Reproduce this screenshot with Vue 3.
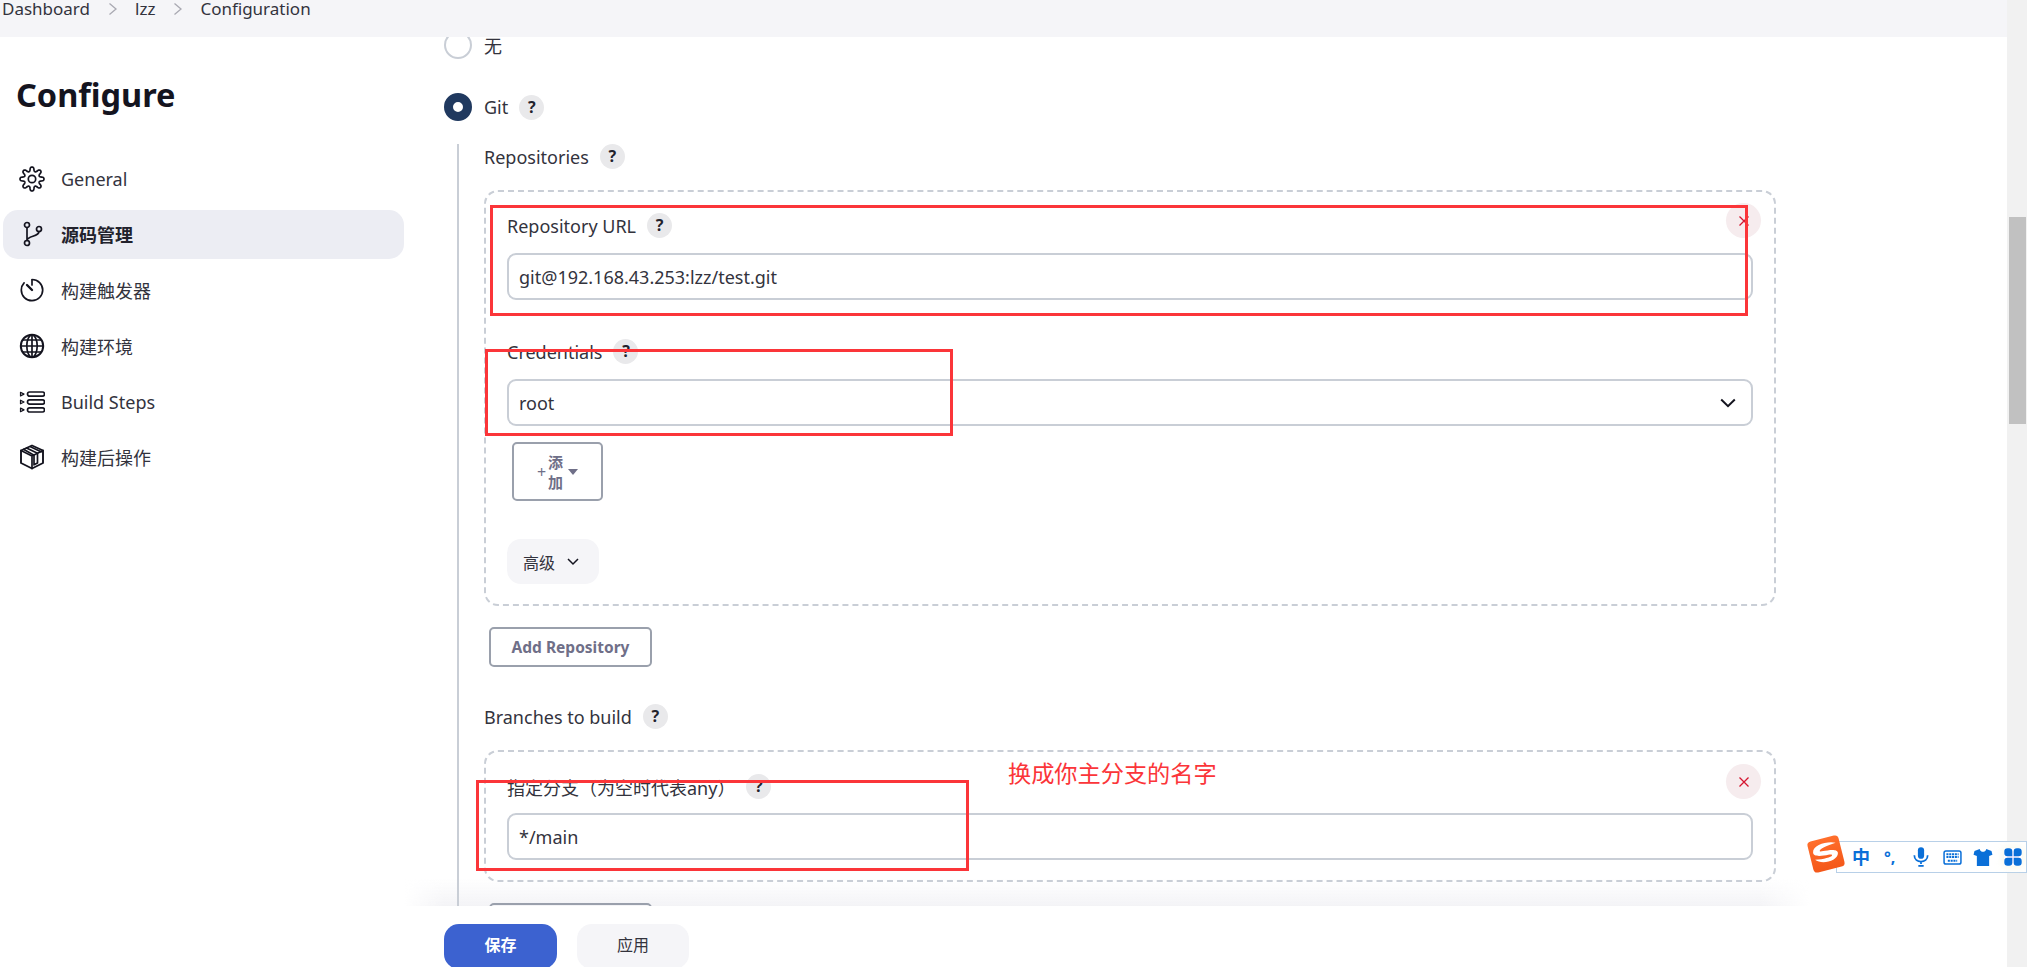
<script setup>
const navItems = [
  { label: 'General', icon: 'gear' },
  { label: '源码管理', icon: 'branch', active: true },
  { label: '构建触发器', icon: 'timer' },
  { label: '构建环境', icon: 'globe' },
  { label: 'Build Steps', icon: 'steps' },
  { label: '构建后操作', icon: 'box' },
]
const crumbs = ['Dashboard', 'lzz', 'Configuration']

// outline of the eight-toothed cog used for "General"
const gearPath = (() => {
  const pts = []
  for (let i = 0; i < 160; i++) {
    const a = (i / 160) * Math.PI * 2
    const wave = Math.cos(a * 8)
    const r = 9.9 + 2.1 * Math.sign(wave) * Math.pow(Math.abs(wave), 0.55)
    pts.push(`${(13 + r * Math.sin(a)).toFixed(2)} ${(13 - r * Math.cos(a)).toFixed(2)}`)
  }
  return 'M' + pts.join('L') + 'Z'
})()
</script>

<template>
  <div class="page">
    <header class="topbar">
      <template v-for="(c, i) in crumbs" :key="c">
        <span class="crumb">{{ c }}</span>
        <svg v-if="i < crumbs.length - 1" class="sep" viewBox="0 0 10 14" width="10" height="14">
          <path d="M1.500 1.500 8 7l-6.500 5.500" fill="none" stroke="#a9a9b2" stroke-width="1.300" />
        </svg>
      </template>
    </header>

    <div class="body">
      <aside class="sidebar">
        <h1 class="title">Configure</h1>
        <nav class="nav">
          <a v-for="n in navItems" :key="n.label" class="nav-item" :class="{ active: n.active }">
            <svg class="nav-icon" viewBox="0 0 26 26" width="26" height="26" fill="none" stroke="#14141f" stroke-width="1.700" stroke-linecap="round" stroke-linejoin="round">
              <template v-if="n.icon === 'gear'">
                <circle cx="13" cy="13" r="3.700" />
                <path :d="gearPath" />
              </template>
              <template v-else-if="n.icon === 'branch'">
                <circle cx="8" cy="4" r="2.500" />
                <circle cx="8" cy="22" r="2.500" />
                <circle cx="20" cy="8" r="2.500" />
                <path d="M8 6.500v13M20 10.500c0 5.500-11.500 4-12 9" />
              </template>
              <template v-else-if="n.icon === 'timer'">
                <path d="M13 2.500c6 0 10.700 4.700 10.700 10.500S19 23.700 13 23.700 2.300 19 2.300 13c0-2.800 1-5.300 2.800-7.200" />
                <path d="M13 3v5" />
                <path d="M8 8l5 5" stroke-width="2.400" />
              </template>
              <template v-else-if="n.icon === 'globe'">
                <circle cx="13" cy="13" r="11.200" stroke-width="2" />
                <ellipse cx="13" cy="13" rx="5.200" ry="11.200" />
                <path d="M13 2v22M2 13h22M3.800 7h18.400M3.800 19h18.400" />
              </template>
              <template v-else-if="n.icon === 'steps'">
                <rect x="8.500" y="3" width="17" height="4.200" rx="2.100" />
                <rect x="8.500" y="10.900" width="17" height="4.200" rx="2.100" />
                <rect x="8.500" y="18.800" width="17" height="4.200" rx="2.100" />
                <path d="M1.500 3.300 5 5.100 1.500 6.900zM1.500 11.200 5 13l-3.500 1.800zM1.500 19.100 5 20.900l-3.500 1.800z" stroke-width="1.200" />
              </template>
              <template v-else>
                <path d="M13 1.500 24 6.500V19l-11 5.500L2 19V6.500z" stroke-width="1.900" />
                <path d="M2 6.500l11 5.500 11-5.500M13 12v12.500" />
                <path d="M7.500 4 18.500 9.300v9.700l-3.500 1.800v-9.500L4.500 5.300" />
                <path d="M11.500 2.700 22 7.800" />
              </template>
            </svg>
            <span>{{ n.label }}</span>
          </a>
        </nav>
      </aside>

      <div class="content">
        <main class="scroller">
          <div class="radio-row first">
            <span class="radio"></span>
            <span class="radio-label">无</span>
          </div>
          <div class="radio-row git">
            <span class="radio on"></span>
            <span class="radio-label">Git</span>
            <span class="help">?</span>
          </div>

          <section class="nested">
            <div class="label-row">
              <span>Repositories</span><span class="help">?</span>
            </div>

            <div class="repeat repo">
              <button class="close"><svg viewBox="0 0 12 12" width="12" height="12"><path d="M1.500 1.500l9 9M10.500 1.500l-9 9" stroke="#d5152f" stroke-width="1.300" /></svg></button>
              <div class="label-row">
                <span>Repository URL</span><span class="help">?</span>
              </div>
              <div class="input">git@192.168.43.253:lzz/test.git</div>

              <div class="label-row cred">
                <span>Credentials</span><span class="help">?</span>
              </div>
              <div class="input select">
                <span>root</span>
                <svg viewBox="0 0 16 10" width="16" height="10"><path d="M1.200 1.500 8 8.200l6.800-6.700" fill="none" stroke="#14141f" stroke-width="2" /></svg>
              </div>

              <button class="btn-add">
                <span class="plus">+</span>
                <span class="add-text">添<br />加</span>
                <span class="caret"></span>
              </button>

              <button class="btn-adv">
                <span>高级</span>
                <svg viewBox="0 0 12 8" width="12" height="8"><path d="M1 1l5 5 5-5" fill="none" stroke="#14141f" stroke-width="1.500" /></svg>
              </button>
            </div>

            <button class="btn-outline">Add Repository</button>

            <div class="label-row branches">
              <span>Branches to build</span><span class="help">?</span>
            </div>

            <div class="repeat branch">
              <button class="close low"><svg viewBox="0 0 12 12" width="12" height="12"><path d="M1.500 1.500l9 9M10.500 1.500l-9 9" stroke="#d5152f" stroke-width="1.300" /></svg></button>
              <div class="label-row">
                <span>指定分支（为空时代表any）</span><span class="help">?</span>
              </div>
              <div class="input">*/main</div>
            </div>

            <button class="btn-outline next"></button>
          </section>
        </main>

        <footer class="actions">
          <button class="save">保存</button>
          <button class="apply">应用</button>
        </footer>
      </div>

      <div class="scrollbar"><div class="thumb"></div></div>
    </div>

    <!-- annotations drawn over the screenshot -->
    <div class="mark m1"></div>
    <div class="mark m2"></div>
    <div class="mark m3"></div>
    <div class="note">换成你主分支的名字</div>

    <!-- IME toolbar floating over the page -->
    <div class="ime">
      <div class="ime-bar">
        <span class="ime-zh">中</span>
        <span class="ime-punct">°,</span>
        <svg viewBox="0 0 18 22" width="16" height="20"><rect x="5.500" y="0" width="7" height="13" rx="3.500" fill="#0a6fd8" /><path d="M1.500 9c0 9.500 15 9.500 15 0M9 16v3" fill="none" stroke="#0a6fd8" stroke-width="2" /><rect x="6" y="20" width="6" height="2" fill="#0a6fd8" /></svg>
        <svg viewBox="0 0 20 16" width="19" height="15"><rect x="1" y="1" width="18" height="14" rx="2" fill="none" stroke="#0a6fd8" stroke-width="1.600" /><path d="M3.500 4.500h13M3.500 7.500h13M5 11.500h10" stroke="#0a6fd8" stroke-width="2" stroke-dasharray="2.200 .8" /></svg>
        <svg viewBox="0 0 20 18" width="20" height="17"><path d="M6.500 0 1 2 0 6l3.500 1.500V18h13V7.500L20 6l-1-4-5.500-2c-.5 4-6.500 4-7 0z" fill="#0a6fd8" /></svg>
        <svg class="clover" viewBox="0 0 18 18" width="18" height="18"><g fill="#0a6fd8"><path d="M8.300 8.300H3.500a3.200 3.200 0 0 1-3.200-3.200V3.500A3.200 3.200 0 0 1 3.500.3h1.600a3.200 3.200 0 0 1 3.200 3.200z" /><path d="M9.700 8.300h4.800a3.200 3.200 0 0 0 3.200-3.200V3.500A3.200 3.200 0 0 0 14.500.3h-1.600a3.200 3.200 0 0 0-3.200 3.200z" /><path d="M8.300 9.700H3.500a3.200 3.200 0 0 0-3.200 3.200v1.600a3.200 3.200 0 0 0 3.200 3.200h1.600a3.200 3.200 0 0 0 3.200-3.200z" /><path d="M9.700 9.700h4.800a3.200 3.200 0 0 1 3.200 3.200v1.600a3.200 3.200 0 0 1-3.200 3.200h-1.600a3.200 3.200 0 0 1-3.200-3.200z" /></g></svg>
      </div>
      <div class="ime-logo">
        <svg viewBox="0 0 32 32" width="32" height="32">
          <path d="M28 7.500C21 3.500 5 4 3.800 11.500 3 16.500 12.500 17 18 17.300c3 .2 4 .8 3.500 1.500-1 1.500-9 1.600-17.500.2 5 6.500 22 7 23.800-1C28.800 13.500 20 12.700 14 12.500c-2.500 0-3.800-.5-3.300-1.200C12 9.300 20 8 28 7.500z" fill="#fff" />
        </svg>
      </div>
    </div>
  </div>
</template>

<style>
html, body { margin: 0; overflow: hidden; background: #fff; }
</style>

<style scoped>
.page {
  position: relative;
  width: 2027px;
  height: 967px;
  overflow: hidden;
  display: flex;
  flex-direction: column;
  background: #fff;
  color: #14141f;
  font-family: "Noto Sans", "Noto Sans CJK SC", sans-serif;
  font-size: 18px;
}
button { font-family: inherit; cursor: pointer; }

.topbar {
  flex: 0 0 37px;
  background: #f5f5f8;
  display: flex;
  align-items: flex-start;
  padding-left: 2px;
  line-height: 18px;
  color: #33333d;
  box-sizing: border-box;
}
.crumb { font-size: 17px; }
.sep { margin: 2px 17.500px 0 17.500px; }

.body { flex: 1; display: flex; min-height: 0; }

.sidebar { flex: 0 0 444px; box-sizing: border-box; padding: 0 0 0 3px; }
.title {
  margin: 33px 0 0 13px;
  font-size: 32.500px;
  line-height: 50px;
  font-weight: 700;
  color: #14141f;
}
.nav { margin-top: 34px; width: 401px; display: flex; flex-direction: column; gap: 6.800px; }
.nav-item {
  height: 49px;
  border-radius: 15px;
  display: flex;
  align-items: center;
  gap: 16px;
  padding-left: 16px;
  color: #33333d;
  font-size: 18px;
}
.nav-item.active { background: #ecedf3; font-weight: 700; color: #22222c; }
.nav-icon { flex: none; }

.content { flex: 1; min-width: 0; display: flex; flex-direction: column; }
.scroller { flex: 1; min-height: 0; overflow: hidden; position: relative; z-index: 1; }

.radio-row { display: flex; align-items: center; height: 28px; }
.radio-row.first { margin-top: -6px; }
.radio-row.git { margin-top: 34px; }
.radio {
  box-sizing: border-box;
  width: 28px;
  height: 28px;
  border-radius: 50%;
  border: 2px solid #c9ced6;
  background: #fff;
}
.radio.on { border: 9.500px solid #20395f; background: #fff; }
.radio-label { margin-left: 12px; font-size: 18px; color: #33333d; }

.help {
  flex: none;
  width: 25px;
  height: 25px;
  margin-left: 11px;
  border-radius: 50%;
  background: #e9e9eb;
  color: #22222c;
  font-size: 16px;
  font-weight: 700;
  line-height: 25px;
  text-align: center;
}

.nested {
  margin: 23px 0 0 13px;
  padding: 0 0 0 25px;
  border-left: 2px solid #c9ced6;
  width: 1293px;
  box-sizing: content-box;
}
.label-row { display: flex; align-items: center; height: 25px; font-size: 18px; color: #33333d; }

.repeat {
  position: relative;
  box-sizing: border-box;
  width: 1292px;
  margin-top: 21px;
  border: 2px dashed #c9ced6;
  border-radius: 14px;
  padding: 0 21px;
}
.repo { height: 416px; padding-top: 21px; }
.branch { height: 132px; margin-top: 21px; padding-top: 22px; }
.cred { margin-top: 39px; }

.input {
  box-sizing: border-box;
  height: 47px;
  margin-top: 15px;
  border: 2px solid #c9ced6;
  border-radius: 9px;
  width: 1246px;
  padding: 0 10px;
  display: flex;
  align-items: center;
  font-size: 18px;
  color: #33333d;
}
.select { justify-content: space-between; padding-right: 15px; margin-top: 15px; }
.branch .input { margin-top: 14px; }

.close {
  position: absolute;
  right: 13px;
  top: 11px;
  width: 35px;
  height: 35px;
  border: 0;
  padding: 0;
  border-radius: 50%;
  background: #f6ecee;
  display: flex;
  align-items: center;
  justify-content: center;
}
.close.low { top: 12px; }

.btn-add {
  display: flex;
  align-items: center;
  justify-content: center;
  box-sizing: border-box;
  width: 91px;
  height: 59px;
  margin: 16px 0 0 5px;
  background: #fff;
  border: 2px solid #9aa0ac;
  border-radius: 5px;
  padding: 0;
  color: #6f6f88;
  font-weight: 600;
}
.plus { font-size: 16px; font-weight: 400; margin-right: 2px; }
.add-text { font-size: 15px; line-height: 20px; }
.caret {
  margin-left: 5px;
  border: 5.500px solid transparent;
  border-top: 6px solid #6f6f88;
  border-bottom: 0;
}

.btn-adv {
  display: flex;
  align-items: center;
  gap: 12px;
  box-sizing: border-box;
  height: 45px;
  width: 92px;
  margin-top: 38px;
  padding: 0 0 0 16px;
  border: 0;
  border-radius: 14px;
  background: #f5f5f8;
  font-size: 16px;
  color: #33333d;
}

.btn-outline {
  display: block;
  box-sizing: border-box;
  width: 163px;
  height: 40px;
  margin: 21px 0 0 5px;
  background: #fff;
  border: 2px solid #9aa0ac;
  border-radius: 5px;
  color: #6f6f88;
  font-size: 15.500px;
  font-weight: 700;
  padding: 0;
}
.btn-outline.next { margin-top: 21px; background: transparent; }
.branches { margin-top: 37px; }

.actions {
  position: relative;
  flex: 0 0 61px;
  min-height: 0;
  background: #fff;
  display: flex;
  align-items: flex-start;
  gap: 20px;
  padding-top: 18px;
  box-sizing: border-box;
}
.actions::before {
  content: "";
  position: absolute;
  left: -40px;
  right: 197px;
  top: -28px;
  height: 28px;
  background: linear-gradient(to bottom, rgba(243, 243, 246, 0), rgba(243, 243, 246, 0.95));
  -webkit-mask-image: linear-gradient(to right, transparent, #000 40px, #000 calc(100% - 50px), transparent);
  mask-image: linear-gradient(to right, transparent, #000 40px, #000 calc(100% - 50px), transparent);
  pointer-events: none;
}
.save, .apply {
  flex: none;
  height: 45px;
  border: 0;
  border-radius: 15px;
  font-size: 16px;
  padding: 0 0 6px;
}
.save { width: 113px; background: #3c62d0; color: #fff; font-weight: 700; }
.apply { width: 112px; background: #f5f5f8; color: #33333d; }

.scrollbar { flex: 0 0 20px; background: #f1f1f1; position: relative; margin-top: -37px; }
.thumb {
  position: absolute;
  left: 2px;
  right: 1px;
  top: 217px;
  height: 207px;
  background: #c1c1c1;
}

.mark { position: absolute; z-index: 2; border: 3px solid #fb3539; box-sizing: border-box; pointer-events: none; }
.m1 { left: 490px; top: 205px; width: 1258px; height: 111px; }
.m2 { left: 485px; top: 349px; width: 468px; height: 87px; }
.m3 { left: 476px; top: 780px; width: 493px; height: 91px; }
.note {
  position: absolute;
  z-index: 2;
  left: 1008px;
  top: 757px;
  color: #fb3539;
  font-size: 23.200px;
  line-height: 32px;
  white-space: nowrap;
}

.ime { position: absolute; z-index: 2; left: 1806px; top: 835px; width: 221px; height: 39px; }
.ime-logo {
  position: absolute;
  left: 4px;
  top: 3px;
  width: 32px;
  height: 32px;
  border-radius: 4px;
  background: linear-gradient(#ff6f2c, #f4581a);
  transform: rotate(-14deg);
  display: flex;
  align-items: center;
  justify-content: center;
}
.ime-bar {
  position: absolute;
  left: 30px;
  top: 6px;
  right: 0;
  height: 32px;
  box-sizing: border-box;
  background: #fff;
  border: 1px solid #b8d0e8;
  display: flex;
  align-items: center;
  padding-left: 15px;
  color: #0a6fd8;
}
.ime-bar > * { flex: none; }
.ime-zh { width: 18px; font-size: 18px; font-weight: 700; line-height: 30px; }
.ime-punct { margin-left: 14px; width: 16px; font-size: 16px; font-weight: 700; line-height: 26px; }
.ime-bar > svg:nth-of-type(1) { margin-left: 13px; }
.ime-bar > svg:nth-of-type(2) { margin-left: 14px; }
.ime-bar > svg:nth-of-type(3) { margin-left: 11px; }
.ime-bar > svg:nth-of-type(4) { margin-left: 11px; }
.clover { background: radial-gradient(circle, rgba(245, 220, 255, 0.5), transparent 75%); box-shadow: 0 0 8px rgba(240, 240, 200, 0.6); }
</style>
